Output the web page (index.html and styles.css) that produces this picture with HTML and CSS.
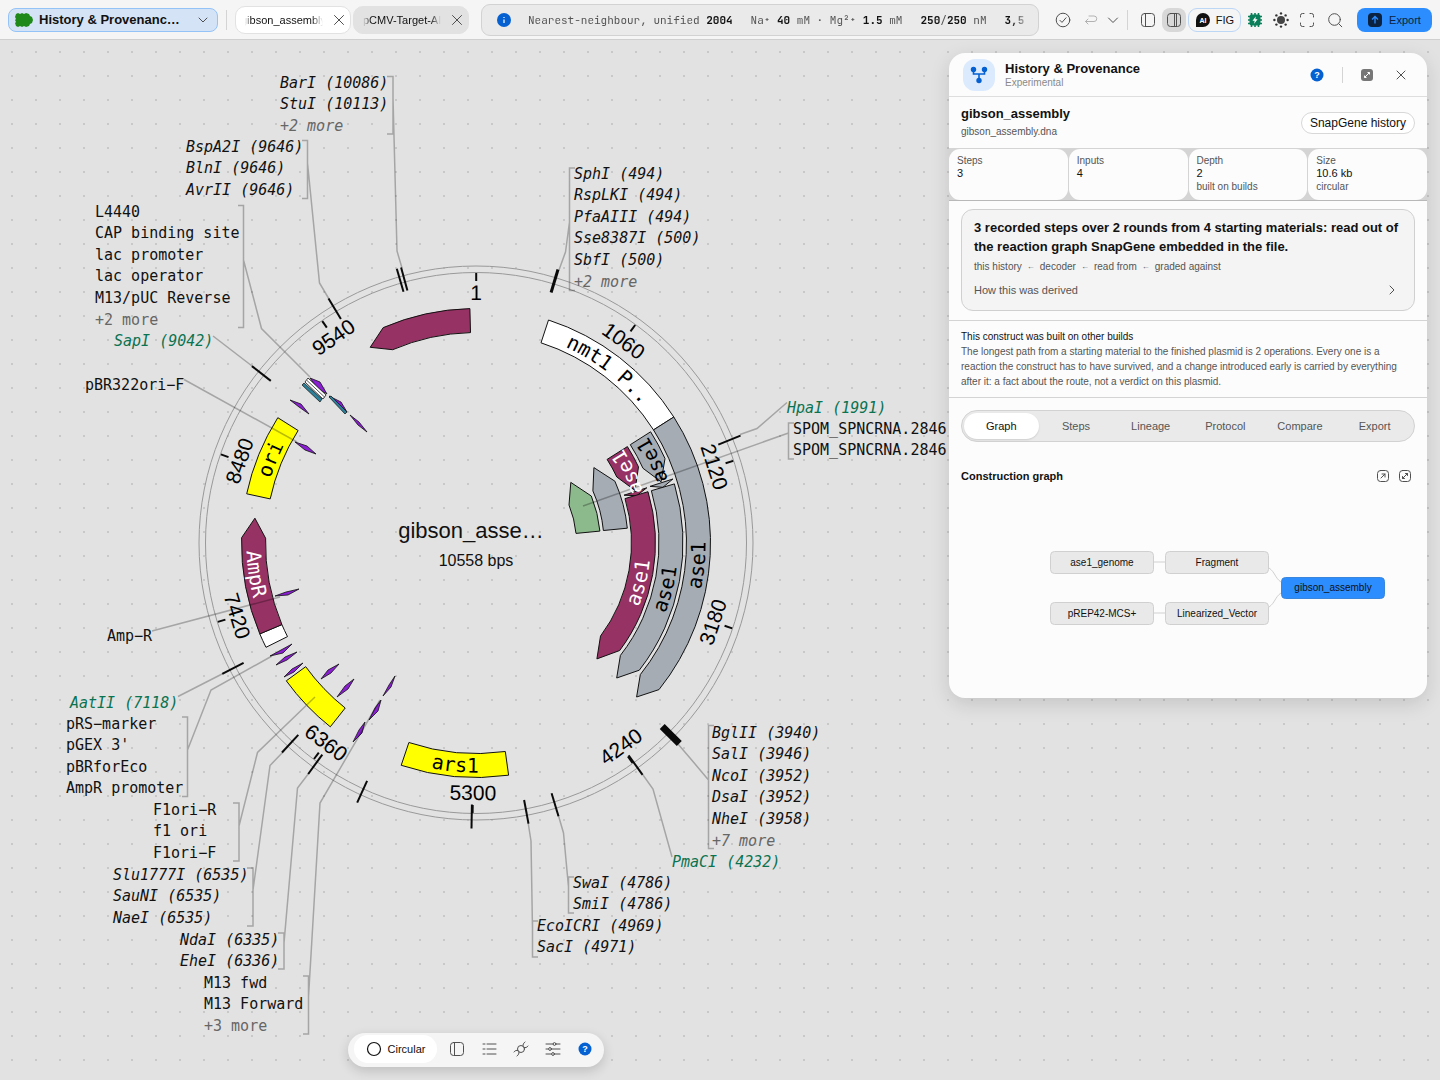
FILE: index.html
```html
<!DOCTYPE html>
<html lang="en">
<head>
<meta charset="utf-8">
<title>History &amp; Provenance – gibson_assembly</title>
<link rel="stylesheet" href="styles.css">
</head>
<body>
<header class="topbar">
  <button class="mode" type="button">
    <svg width="18" height="14" viewBox="0 0 18 14"><path d="M1 1l2-1 2 1 2-1 2 1 2-1 3 1 1 2 2 1 1 3-1 3-2 1-1 2-3 1-2-1-2 1-2-1-2 1-2-1-1-3 1-1-1-2 1-1-1-2z" fill="#1f8a1a"/></svg>
    <strong>History &amp; Provenanc…</strong>
    <svg class="line" width="12" height="12" viewBox="0 0 12 12"><path d="M2 4l4 4 4-4"/></svg>
  </button>
  <span class="rule"></span>
  <nav class="files">
    <a class="file active" href="#"><span class="fade">gibson_assembly</span><svg class="line" width="12" height="12" viewBox="0 0 12 12"><path d="M1.500 1.500l9 9M10.500 1.500l-9 9"/></svg></a>
    <a class="file" href="#"><span class="fade">pCMV-Target-AID</span><svg class="line" width="12" height="12" viewBox="0 0 12 12"><path d="M1.500 1.500l9 9M10.500 1.500l-9 9"/></svg></a>
  </nav>
  <div class="readout">
    <svg width="14" height="14" viewBox="0 0 14 14"><circle cx="7" cy="7" r="7" fill="#0561d1"/><path d="M7 6.5v3.6M7 4v1" stroke="#fff" stroke-width="1.2"/></svg>
    <p class="conditions"><span>Nearest-neighbour, unified <b>2004</b></span><span>Na⁺ <b>40</b> mM · Mg²⁺ <b>1.5</b> mM</span><span><b>250</b>/<b>250</b> nM</span><span><b>3,5</b></span></p>
  </div>
  <div class="tools">
    <button type="button" class="tool" aria-label="Verify"><svg class="line" width="16" height="16" viewBox="0 0 16 16"><circle cx="8" cy="8" r="6.8"/><path d="M5 8.4l2 2 4-4.6"/></svg></button>
    <button type="button" class="tool dim" aria-label="Undo"><svg class="line" width="16" height="16" viewBox="0 0 16 16"><path d="M5 7L2.500 9.500 5 12M2.500 9.500H11a2.700 2.700 0 0 0 0-5.500H6"/></svg></button>
    <button type="button" class="tool slim" aria-label="More"><svg class="line" width="12" height="12" viewBox="0 0 12 12"><path d="M1.500 4L6 8.500 10.500 4"/></svg></button>
    <span class="rule"></span>
    <button type="button" class="tool wide" aria-label="Left panel"><svg class="line" width="16" height="16" viewBox="0 0 16 16"><rect x="1.500" y="1.500" width="13" height="13" rx="3"/><path d="M5.500 1.500v13"/></svg></button>
    <button type="button" class="tool on" aria-label="Right panel"><svg class="line" width="16" height="16" viewBox="0 0 16 16"><rect x="1.500" y="1.500" width="13" height="13" rx="3"/><path d="M8.500 1.500v13M10.500 1.500v13"/></svg></button>
    <button type="button" class="fig"><svg width="16" height="16" viewBox="0 0 16 16"><path d="M1 15V8a7 7 0 1 1 7 7z" fill="#111"/><text x="8" y="11" class="ai">AI</text></svg><span>FIG</span></button>
    <button type="button" class="tool" aria-label="Processor"><svg width="16" height="16" viewBox="0 0 16 16"><path d="M4.500 1v14M8 1v14M11.500 1v14M1 4.500h14M1 8h14M1 11.500h14" stroke="#0a7f5a" stroke-width="1.600"/><rect x="2.500" y="2.500" width="11" height="11" rx="2" fill="#0a7f5a"/><path d="M8.800 4.500L5.500 8.700h2.200l-.6 3 3.500-4.400H8.400z" fill="#fff"/></svg></button>
    <button type="button" class="tool" aria-label="Theme"><svg width="16" height="16" viewBox="0 0 16 16"><circle cx="8" cy="8" r="4" fill="#444"/><g fill="#333"><circle cx="8" cy="1.400" r="1.200"/><circle cx="8" cy="14.600" r="1.200"/><circle cx="1.400" cy="8" r="1.200"/><circle cx="14.600" cy="8" r="1.200"/><circle cx="3.400" cy="3.400" r="1.200"/><circle cx="12.600" cy="3.400" r="1.200"/><circle cx="3.400" cy="12.600" r="1.200"/><circle cx="12.600" cy="12.600" r="1.200"/></g></svg></button>
    <button type="button" class="tool" aria-label="Fullscreen"><svg class="line" width="16" height="16" viewBox="0 0 16 16"><path d="M1.500 5V3.500a2 2 0 0 1 2-2H5M11 1.500h1.500a2 2 0 0 1 2 2V5M14.500 11v1.500a2 2 0 0 1-2 2H11M5 14.500H3.500a2 2 0 0 1-2-2V11"/></svg></button>
    <button type="button" class="tool search" aria-label="Search"><svg class="line" width="16" height="16" viewBox="0 0 16 16"><circle cx="7.500" cy="7.500" r="5.800"/><path d="M11.800 11.800l3 3"/></svg></button>
    <button type="button" class="export"><svg width="14" height="14" viewBox="0 0 14 14"><rect width="14" height="14" rx="4" fill="#0b2340"/><path d="M7 10.500v-7M4 6.500l3-3 3 3" fill="none" stroke="#2c8dff" stroke-width="1.300"/></svg>Export</button>
  </div>
</header>

<main class="canvas">
  <svg class="map" id="map" width="960" height="1040" viewBox="0 40 960 1040" role="img" aria-label="Circular plasmid map"></svg>

  <aside class="panel">
    <header class="panel-head">
      <span class="badge"><svg width="18" height="18" viewBox="0 0 18 18"><g fill="#0561d1"><circle cx="3.500" cy="3.500" r="2.700"/><circle cx="14.500" cy="3.500" r="2.700"/><circle cx="9" cy="14.500" r="2.700"/></g><path d="M3.500 3.500V8h11V3.500M9 8v6" fill="none" stroke="#0561d1" stroke-width="1.600"/></svg></span>
      <div class="panel-title"><h1>History &amp; Provenance</h1><p>Experimental</p></div>
      <div class="panel-tools">
        <button type="button" aria-label="Help"><svg width="14" height="14" viewBox="0 0 14 14"><circle cx="7" cy="7" r="6.500" fill="#0561d1"/><text x="7" y="10" class="q">?</text></svg></button>
        <span class="rule"></span>
        <button type="button" aria-label="Expand"><svg width="12" height="12" viewBox="0 0 12 12"><rect width="12" height="12" rx="3" fill="#777"/><path d="M3.500 8.500l5-5M6.500 3.500h2v2M3.500 6.500v2h2" fill="none" stroke="#fff"/></svg></button>
        <button type="button" aria-label="Close"><svg class="line" width="12" height="12" viewBox="0 0 12 12"><path d="M2 2l8 8M10 2l-8 8"/></svg></button>
      </div>
    </header>
    <section class="subject">
      <div><h2>gibson_assembly</h2><p>gibson_assembly.dna</p></div>
      <button type="button" class="chip">SnapGene history</button>
    </section>
    <dl class="stats">
      <div><dt>Steps</dt><dd>3</dd></div>
      <div><dt>Inputs</dt><dd>4</dd></div>
      <div><dt>Depth</dt><dd>2</dd><dd class="note">built on builds</dd></div>
      <div><dt>Size</dt><dd>10.6 kb</dd><dd class="note">circular</dd></div>
    </dl>
    <section class="summary">
      <div class="card">
        <h3>3 recorded steps over 2 rounds from 4 starting materials: read out of the reaction graph SnapGene embedded in the file.</h3>
        <p class="chain"><span>this history</span><i>←</i><span>decoder</span><i>←</i><span>read from</span><i>←</i><span>graded against</span></p>
        <button type="button" class="derive"><span>How this was derived</span><svg class="line" width="12" height="12" viewBox="0 0 12 12"><path d="M4 2l4 4-4 4"/></svg></button>
      </div>
    </section>
    <section class="finding">
      <h4>This construct was built on other builds</h4>
      <p>The longest path from a starting material to the finished plasmid is 2 operations. Every one is a reaction the construct has to have survived, and a change introduced early is carried by everything after it: a fact about the route, not a verdict on this plasmid.</p>
    </section>
    <section class="views">
      <nav class="tabs">
        <button type="button" class="current">Graph</button><button type="button">Steps</button><button type="button">Lineage</button><button type="button">Protocol</button><button type="button">Compare</button><button type="button">Export</button>
      </nav>
      <div class="graph-head">
        <h3>Construction graph</h3>
        <button type="button" aria-label="Open"><svg class="line" width="12" height="12" viewBox="0 0 12 12"><rect x=".5" y=".5" width="11" height="11" rx="3"/><path d="M4 8l4-4M5 4h3v3"/></svg></button>
        <button type="button" aria-label="Maximise"><svg class="line" width="12" height="12" viewBox="0 0 12 12"><rect x=".5" y=".5" width="11" height="11" rx="3"/><path d="M3.500 8.500l5-5M6.500 3.500h2v2M3.500 6.500v2h2"/></svg></button>
      </div>
      <svg class="graph" viewBox="0 0 454 190" role="img" aria-label="Construction graph">
        <g class="edges"><path d="M193 66h12M193 117h12M308 72c6 4 6 10 12 14M308 111c6-4 6-10 12-14"/></g>
        <g class="nodes"><rect x="89.500" y="55.500" width="103" height="22" rx="4"/><rect x="204.500" y="55.500" width="103" height="22" rx="4"/><rect x="89.500" y="106.500" width="103" height="22" rx="4"/><rect x="204.500" y="106.500" width="103" height="22" rx="4"/><rect class="final" x="320.500" y="81.500" width="103" height="21" rx="4"/></g>
        <g class="names"><text x="141" y="70">ase1_genome</text><text x="256" y="70">Fragment</text><text x="141" y="121">pREP42-MCS+</text><text x="256" y="121">Linearized_Vector</text><text x="372" y="95">gibson_assembly</text></g>
      </svg>
    </section>
  </aside>

  <div class="dock">
    <button type="button" class="shape"><svg width="16" height="16" viewBox="0 0 16 16"><circle cx="8" cy="8" r="6.500" fill="none" stroke="#111" stroke-width="1.200"/></svg>Circular</button>
    <button type="button" aria-label="Panel"><svg class="line" width="16" height="16" viewBox="0 0 16 16"><rect x="1.500" y="1.500" width="13" height="13" rx="3"/><path d="M5.500 1.500v13"/></svg></button>
    <button type="button" aria-label="List"><svg class="line" width="16" height="16" viewBox="0 0 16 16"><path d="M6 3h9M6 8h9M6 13h9M2 3h2M2 8h2M2 13h2"/></svg></button>
    <button type="button" aria-label="Enzymes"><svg class="line" width="16" height="16" viewBox="0 0 16 16"><circle cx="8" cy="8" r="3.500"/><path d="M10 5C9.800 3.500 10.500 2 12 1M11 6.500c1.500.5 3 0 4-1.500M6 11c.2 1.500-.5 3-2 4M5 9.500c-1.500-.5-3 0-4 1.500"/></svg></button>
    <button type="button" aria-label="Settings"><svg class="line" width="16" height="16" viewBox="0 0 16 16"><path d="M1 3h7M11 3h4M1 8h2M6.500 8H15M1 13h5M9.500 13H15"/><circle cx="9.500" cy="3" r="1.400"/><circle cx="5" cy="8" r="1.400"/><circle cx="8" cy="13" r="1.400"/></svg></button>
    <button type="button" aria-label="Help"><svg width="14" height="14" viewBox="0 0 14 14"><circle cx="7" cy="7" r="6.500" fill="#0561d1"/><text x="7" y="10" class="q">?</text></svg></button>
  </div>
</main>
<script src="map.js"></script>
</body>
</html>
```
FILE: map.js
```js
const NS = 'http://www.w3.org/2000/svg';
const map = document.getElementById('map');
const CX = 476, CY = 543, LENGTH = 10558;

function add(tag, attrs, text, parent = map) {
  const el = document.createElementNS(NS, tag);
  for (const k in attrs) el.setAttribute(k, attrs[k]);
  if (text !== undefined) el.textContent = text;
  parent.appendChild(el);
  return el;
}
const pt = (r, deg) => {
  const a = deg * Math.PI / 180;
  return (CX + r * Math.sin(a)).toFixed(1) + ' ' + (CY - r * Math.cos(a)).toFixed(1);
};

// Backbone
add('circle', { cx: CX, cy: CY, r: 277, class: 'ring' });
add('circle', { cx: CX, cy: CY, r: 270.5, class: 'ring' });

// Feature arcs: lane, tail angle, tip angle, fill, arrowhead angle (0 = block)
const purple = '#973264', grey = '#a5acb4', yellow = '#ffff00', green = '#8dba8d';
const features = [
  [0, -1.5, -28.4, purple, 5.1], [0, 18, 57.5, '#fff', 0], [0, 57.5, 133.8, grey, 5.1],
  [1, 57.5, 71.7, grey, 5.8], [1, 72, 73.4, grey, 1.4], [1, 73.4, 133.8, grey, 5.9],
  [2, 57.5, 71.7, purple, 6.8], [2, 72.1, 73.6, purple, 1.5], [2, 73.4, 133.8, purple, 7],
  [3, 84.4, 57.4, grey, 8.6], [4, 84.5, 57.4, green, 10.4],
  [0, 172, 198.6, yellow, 0], [0, 218.4, 234, yellow, 0], [0, 243.6, 247.2, '#fff', 0],
  [0, 247.2, 276.4, purple, 5.1], [0, 282.1, 302.3, yellow, 0]
];
for (const [lane, from, to, fill, head] of features) {
  const outer = 234.5 - 27.5 * lane, inner = outer - 24, dir = to > from ? 1 : -1;
  const neck = to - dir * head, sweep = dir > 0 ? 1 : 0;
  add('path', {
    class: 'feature', fill,
    d: `M${pt(outer, from)}A${outer} ${outer} 0 0 ${sweep} ${pt(outer, neck)}` +
       `L${head ? pt(outer - 12, to) : pt(inner, neck)}L${pt(inner, neck)}` +
       `A${inner} ${inner} 0 0 ${1 - sweep} ${pt(inner, from)}Z`
  });
}

// Primers and short elements
[
  '290 400 301 404 309 414 299 407', '295 442 307 446 316 454 305 450',
  '350 415 359 422 367 432 358 425', '329 396 341 402 347 412 337 404',
  '310 378 320 382 327 394 317 388', '275 596 286 592 299 589 288 595',
  '270 656 281 650 292 644 283 653', '276 665 285 657 297 652 287 660',
  '284 677 292 669 303 663 294 672', '321 679 328 670 339 664 331 673',
  '337 697 345 686 354 679 348 689', '383 696 389 685 395 676 391 687',
  '369 720 375 708 381 700 378 711', '353 742 359 730 365 722 362 733'
].forEach(points => add('polygon', { points, class: 'primer' }));
add('polygon', { points: '304 383 322 399 320 402 302 385', class: 'operator' });
add('polygon', { points: '329 397 331 396 347 412 345 414', class: 'operator' });
add('polygon', { points: '308 378 326 395 323 399 305 382', class: 'site' });
add('path', { d: 'M307 380.500L324.500 397', class: 'divider' });

// Leaders and brackets
[
  'M387 76.500H393V134H387M393 98L397 251 402 268', 'M302 140.500H307.500V198.500H302M307.500 163L319.500 283 329 299',
  'M238 205.500H243.500V327.500H238M243.500 260L261.500 328.500 310 377', 'M213 336L252 366', 'M184 379.500L297 442',
  'M575 168H569.500V290.500H575M569.500 222L565.500 252 559 270', 'M787 402.500L757 428.500 740 434.500',
  'M794 423H788.500V459H794M788.500 433L583 506', 'M714 725.500H708.500V848.500H714M708.500 780L690 758 678 744',
  'M672 857L653 789 643 775', 'M574 877H568.500V913H574M568.500 887L563.500 833 558 814',
  'M538 921H532.500V957H538M532.500 930L531 841 528 822', 'M178 696.500L224 673',
  'M182 717H187.500V796.500H182M187.500 750L211 690 272 656', 'M233 803H239V861H233M239 826L257.500 752.500 315 697',
  'M247 868H253V926H247M253 890L270 765.500 283 752', 'M278 933H284V969H278M284 943L297.500 788 309 773',
  'M303 976H308.500V1034H303M308.500 997L320 803 380 700', 'M152 631L280 597'
].forEach(d => add('path', { d, class: 'leader' }));

// Cut sites: angle, stroke width
[
  [16.7, 3], [67.9, 2], [134.6, 7], [144.3, 2], [163.2, 2], [169.4, 2], [180.9, 2], [204.6, 2],
  [216, 2], [222.8, 2], [242.7, 2], [308.3, 2], [328.9, 2], [343.9, 2], [344.8, 2]
].forEach(([a, w]) => add('path', { d: `M${pt(261.5, a)}L${pt(285.5, a)}`, class: 'cut', 'stroke-width': w }));

// Scale
[1, 1060, 2120, 3180, 4240, 5300, 6360, 7420, 8480, 9540].forEach(bp => {
  const a = bp / LENGTH * 360;
  add('path', { d: `M${pt(262, a)}L${pt(270, a)}`, class: 'cut', 'stroke-width': 2 });
  const [x, y] = pt(250, a).split(' ');
  add('text', { x, y, dy: 7, class: 'scale', transform: `rotate(${a > 90 && a < 270 ? a - 180 : a} ${x} ${y})` }, bp);
});

// Names that follow their arc: text, lane, centre angle, clockwise, colour
[
  ['nmt1 P..', 0, 37.3, 1, '#000'], ['ase1', 0, 95.7, 0, '#000'], ['ase1', 1, 103.6, 0, '#000'], ['ase1', 2, 103.6, 0, '#fff'],
  ['ase1', 1, 65, 0, '#000'], ['ase1', 2, 65, 0, '#fff'], ['ars1', 0, 185.3, 0, '#000'],
  ['AmpR', 0, 262, 0, '#fff'], ['ori', 0, 292.2, 1, '#000']
].forEach(([name, lane, mid, cw, fill], i) => {
  const r = 222.5 - 27.5 * lane + (cw ? -7 : 7), from = mid + (cw ? -30 : 30), to = mid + (cw ? 30 : -30);
  add('path', { id: 'arc' + i, fill: 'none', d: `M${pt(r, from)}A${r} ${r} 0 0 ${cw} ${pt(r, to)}` });
  const t = add('text', { class: 'arc-name', fill });
  add('textPath', { href: '#arc' + i, startOffset: '50%' }, name, t);
});

// Outer labels: x, first baseline, kind, lines
[
  [280, 88, 'cutter', 'BarI (10086)|StuI (10113)|+2 more'], [186, 152, 'cutter', 'BspA2I (9646)|BlnI (9646)|AvrII (9646)'],
  [95, 217, 'name', 'L4440|CAP binding site|lac promoter|lac operator|M13/pUC Reverse|+2 more'],
  [114, 346, 'unique', 'SapI (9042)'], [85, 390, 'name', 'pBR322ori−F'],
  [574, 179, 'cutter', 'SphI (494)|RspLKI (494)|PfaAIII (494)|Sse8387I (500)|SbfI (500)|+2 more'],
  [787, 413, 'unique', 'HpaI (1991)'], [793, 434, 'name', 'SPOM_SPNCRNA.2846|SPOM_SPNCRNA.2846'],
  [712, 738, 'cutter', 'BglII (3940)|SalI (3946)|NcoI (3952)|DsaI (3952)|NheI (3958)|+7 more'],
  [672, 867, 'unique', 'PmaCI (4232)'], [573, 888, 'cutter', 'SwaI (4786)|SmiI (4786)'],
  [537, 931, 'cutter', 'EcoICRI (4969)|SacI (4971)'], [70, 708, 'unique', 'AatII (7118)'],
  [66, 729, 'name', "pRS−marker|pGEX 3'|pBRforEco|AmpR promoter"], [153, 815, 'name', 'F1ori−R|f1 ori|F1ori−F'],
  [113, 880, 'cutter', 'Slu1777I (6535)|SauNI (6535)|NaeI (6535)'], [180, 945, 'cutter', 'NdaI (6335)|EheI (6336)'],
  [204, 988, 'name', 'M13 fwd|M13 Forward|+3 more'], [107, 641, 'name', 'Amp−R']
].forEach(([x, y, kind, lines]) => lines.split('|').forEach((line, i) =>
  add('text', { x, y: y + Math.floor(i * 21.6), class: 'label ' + kind + (line[0] === '+' ? ' more' : '') }, line)));

add('text', { x: 471, y: 538, class: 'plasmid' }, 'gibson_asse…');
add('text', { x: 476, y: 566, class: 'size' }, '10558 bps');
```
FILE: styles.css
```css
* { box-sizing: border-box; margin: 0; padding: 0; }
body { min-height: 100vh; display: flex; flex-direction: column; background: #e2e2e2; color: #111; font: 12px "Liberation Sans", Arial, sans-serif; }
button { border: 0; background: none; font: inherit; color: inherit; display: flex; align-items: center; justify-content: center; }
a { color: inherit; text-decoration: none; }
svg { display: block; flex: none; }
.line { fill: none; stroke: #505050; stroke-width: 1; stroke-linecap: round; stroke-linejoin: round; }
.rule { width: 1px; height: 20px; background: #d4d4d4; flex: none; }

.topbar { height: 40px; display: flex; align-items: center; padding: 0 8px; background: #f5f5f5; border-bottom: 1px solid #cfcfcf; }
.mode { width: 210px; height: 24px; gap: 6px; padding: 0 8px 0 6px; border: 1px solid #94c3f8; border-radius: 8px; background: #d5e3f6; flex: none; }
.mode strong { flex: 1; text-align: left; font-size: 13px; white-space: nowrap; }
.topbar > .rule { margin: 0 8px; }
.files { display: flex; gap: 2px; }
.file { width: 116px; height: 28px; display: flex; align-items: center; gap: 10px; padding: 0 5px 0 9px; border: 1px solid #e2e2e2; border-radius: 10px; background: #e2e2e2; font-size: 11px; }
.file.active { padding-left: 5px; background: #fff; }
.fade { flex: 1; overflow: hidden; white-space: nowrap; mask-image: linear-gradient(90deg, transparent, #000 8px, #000 86%, transparent); }
.file.active .fade { mask-image: linear-gradient(90deg, transparent 4px, #000 10px, #000 86%, transparent); }
.readout { flex: 1; min-width: 0; height: 32px; margin-left: 12px; padding: 0 8px 0 15px; display: flex; align-items: center; gap: 17px; border: 1px solid #d2d2d2; border-radius: 9px; background: #eaeaea; }
.conditions { flex: 1; min-width: 0; display: flex; gap: 18px; overflow: hidden; white-space: nowrap; font: 11px "JetBrains Mono", "Noto Sans Mono", "DejaVu Sans Mono", monospace; color: #555; mask-image: linear-gradient(90deg, #000 96%, transparent); }
.conditions b { color: #111; }
.tools { display: flex; align-items: center; margin-left: 11px; flex: none; }
.tool { width: 26px; height: 24px; }
.tool.dim { width: 30px; opacity: .4; }
.tool.slim { width: 14px; margin-right: 7px; }
.tool.wide { width: 28px; margin-left: 6px; }
.tool.search { margin-left: 2px; }
.tool.on { width: 24px; background: #d8d8d8; border-radius: 8px; }
.fig { width: 53px; height: 24px; margin: 0 1px 0 2px; gap: 5px; border: 1px solid #bcd6f5; border-radius: 9px; font-size: 11px; }
.ai { font: bold 7px "Liberation Sans", sans-serif; fill: #fff; text-anchor: middle; }
.export { width: 75px; height: 24px; margin-left: 9px; gap: 7px; border-radius: 8px; background: #2c8dff; color: #0b2340; font-size: 11px; }

.canvas { flex: 1; position: relative; background: radial-gradient(circle, #c8c8c8 1px, transparent 1px) 0 0 / 24px 24px; }
.map { max-width: 100%; }
.ring { fill: none; stroke: #999; }
.feature { stroke: #111; }
.primer { fill: #8a1fd1; stroke: #111; stroke-width: .8; }
.operator { fill: #2b7f99; stroke: #111; stroke-width: .7; }
.site { fill: #fff; stroke: #111; stroke-width: .8; }
.divider { stroke: #111; stroke-width: .7; }
.leader { fill: none; stroke: #000; stroke-opacity: .27; stroke-width: 1.500; }
.cut { stroke: #0a0a0a; }
.scale { font: 21px "Liberation Sans", sans-serif; text-anchor: middle; }
.arc-name { font: 20px "DejaVu Sans Mono", monospace; text-anchor: middle; }
.label { font: 15px "DejaVu Sans Mono", monospace; fill: #111; }
.cutter, .unique { font-style: italic; }
.label.unique { fill: #0a7350; }
.label.more { fill: #666; }
.plasmid { font: 22px "Liberation Sans", sans-serif; fill: #111; text-anchor: middle; }
.size { font: 16px "Liberation Sans", sans-serif; fill: #111; text-anchor: middle; }

.panel { position: absolute; top: 13px; right: 13px; width: 478px; background: #fcfcfc; border-radius: 16px; overflow: hidden; box-shadow: 0 6px 20px rgba(0,0,0,.13); }
.panel-head { height: 44px; display: flex; align-items: center; gap: 10px; padding: 0 16px 0 14px; border-bottom: 1px solid #dedede; }
.badge { width: 32px; height: 32px; border-radius: 12px; background: #dceafd; display: grid; place-items: center; }
.panel-title { flex: 1; }
.panel h1, .panel h2, .card h3 { font-size: 13px; font-weight: bold; }
.panel-title h1 { line-height: 15px; }
.panel-title p { font-size: 10px; line-height: 13px; color: #8a8a8a; }
.panel-tools { display: flex; align-items: center; gap: 18px; }
.panel-tools .rule { height: 16px; }
.panel-tools button:last-child { width: 20px; }
.subject { height: 51px; display: flex; align-items: center; justify-content: space-between; padding: 0 12px; }
.subject h2 { line-height: 18px; }
.subject p { font-size: 10px; line-height: 17px; color: #555; }
.chip { height: 22px; padding: 0 8px; border: 1px solid #d8d8d8; border-radius: 11px; background: #fff; }
.stats { display: grid; grid-template-columns: repeat(4, 1fr); gap: 1px; padding-top: 1px; background: #d4d4d4; border-bottom: 1px solid #b8b8b8; }
.stats div { height: 51px; padding: 5px 8px; border-radius: 11px; background: #fcfcfc; }
.stats dt, .stats .note { font-size: 10px; line-height: 13px; color: #555; }
.stats dd { font-size: 11px; line-height: 13px; color: #111; }
.summary { padding: 8px 12px 9px; border-bottom: 1px solid #d4d4d4; }
.card { padding: 8px 12px 10px; border: 1px solid #d0d0d0; border-radius: 12px; background: #f4f4f4; }
.card h3 { line-height: 19px; }
.chain { display: flex; gap: 5px; margin-top: 3px; font-size: 10px; line-height: 16px; color: #555; }
.chain i { font-style: normal; font-size: 8px; }
.derive { width: 100%; height: 20px; margin-top: 5px; padding-right: 4px; justify-content: space-between; font-size: 11px; color: #555; }
.finding { padding: 8px 12px; border-bottom: 1px solid #d4d4d4; font-size: 10px; line-height: 15px; color: #555; }
.finding h4 { font-size: 10px; font-weight: normal; color: #111; }
.views { padding: 12px; }
.tabs { display: grid; grid-template-columns: repeat(6, 1fr); padding: 2px; height: 32px; border: 1px solid #d2d2d2; border-radius: 16px; background: #eaeaea; font-size: 11px; color: #555; }
.tabs button { border-radius: 13px; }
.tabs .current { background: #fff; color: #111; box-shadow: 0 1px 2px rgba(0,0,0,.12); }
.graph-head { display: flex; align-items: center; gap: 10px; margin-top: 26px; padding-right: 4px; }
.graph-head h3 { flex: 1; font-size: 11px; line-height: 16px; }
.graph { width: 100%; height: auto; margin-top: 12px; }
.edges { fill: none; stroke: #d0d0d0; stroke-width: 1; }
.nodes { fill: #e9e9e9; stroke: #d0d0d0; }
.nodes .final { fill: #2c8dff; stroke: #3a86dc; }
.names { font-size: 10px; fill: #111; text-anchor: middle; }
.q { font: bold 9px "Liberation Sans", sans-serif; fill: #fff; text-anchor: middle; }

.dock { position: absolute; left: 348px; bottom: 13px; height: 34px; display: flex; align-items: center; gap: 1px; padding: 0 4px 2px 6px; border-radius: 17px; background: #f5f5f5; box-shadow: 0 4px 12px rgba(0,0,0,.16); font-size: 11px; }
.dock button { width: 31px; height: 28px; }
.dock .shape { width: 83px; gap: 6px; margin-right: 3px; border-radius: 14px; background: #fff; }
```
